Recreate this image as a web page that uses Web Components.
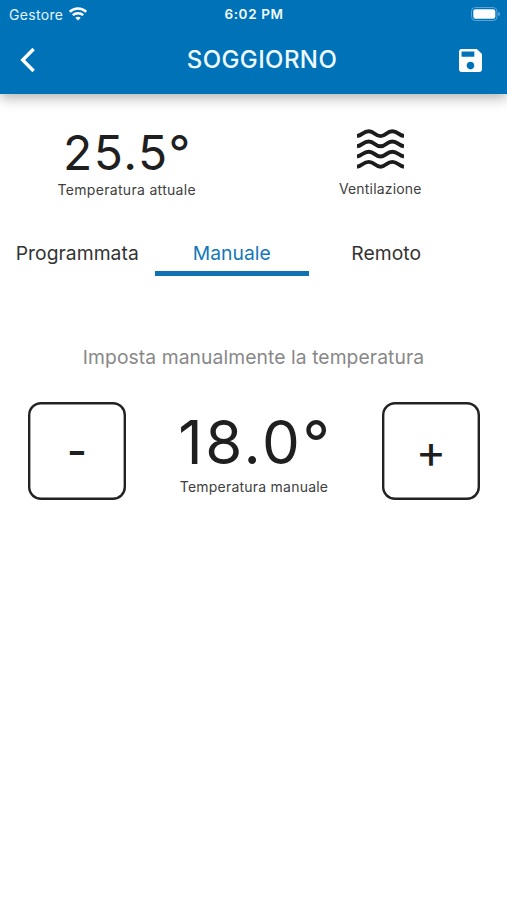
<!DOCTYPE html>
<html lang="it">
<head>
<meta charset="utf-8">
<title>Soggiorno</title>
<style>
html,body{margin:0;height:100%;background:#fff;overflow:hidden}
body{font-family:Inter,"Liberation Sans",sans-serif;color:#1f1f1f}
</style>
</head>
<body>
<thermostat-screen></thermostat-screen>
<script>
const define=(name,html)=>customElements.define(name,class extends HTMLElement{
  constructor(){super();this.attachShadow({mode:'open'}).innerHTML=html;}
});

define('status-bar',`<style>
:host{display:grid;grid-template-columns:1fr auto 1fr;height:27px;align-items:center;color:#e6f5ff;font-size:14px;line-height:27px}
.left{display:flex;align-items:center;gap:6px;padding-left:9px;letter-spacing:.32px}
.time{font-weight:600;font-size:13.5px;letter-spacing:.6px;color:#f2faff;padding:1px 0 0 1px}
.right{display:flex;justify-content:flex-end;padding-right:6px}
svg{display:block}
</style>
<div class="left"><span>Gestore</span><svg width="18" height="14" viewBox="0 0.5 18 14" fill="none" stroke="#fff" stroke-width="2.5"><path d="M.8 5.3C5.4.8 12.6.8 17.2 5.3"/><path d="M3.8 8.7c2.9-2.7 7.5-2.7 10.4 0"/><path d="M9 14l-2.700-2.800c1.500-1.300 3.900-1.300 5.400 0z" fill="#fff" stroke="none"/></svg></div>
<div class="time">6:02 PM</div>
<div class="right"><svg width="30" height="14" viewBox="0 0 30 14"><rect x=".5" y=".5" width="25.5" height="13" rx="3.8" fill="none" stroke="#5aa5d6"/><rect x="2.3" y="2.3" width="22" height="9.4" rx="2.2" fill="#fff"/><path d="M27.4 4.8c2 .8 2 3.600 0 4.400z" fill="#79b8e2"/></svg></div>`);

define('app-header',`<style>
:host{display:block;height:94px;background:#0072b8;box-shadow:0 4px 12px rgba(0,0,0,.3)}
.bar{display:grid;grid-template-columns:69px 1fr 52px;height:66px;align-items:center}
.title{text-align:center;color:#eefaff;font-size:24px;line-height:30px;font-weight:500;letter-spacing:.4px}
svg{display:block}
.back{padding-left:20px}.save{padding-left:4px}
</style>
<status-bar></status-bar>
<div class="bar"><div class="back"><svg width="16" height="26" viewBox="0 0 16 26" fill="none" stroke="#fff" stroke-width="3.4"><path d="M13.600 2L2.700 13l10.900 11"/></svg></div>
<div class="title"><slot></slot></div>
<div class="save"><svg width="23" height="23" viewBox="3 3 18 18" fill="#fff"><path d="M17 3H5c-1.110 0-2 .9-2 2v14c0 1.100.89 2 2 2h14c1.100 0 2-.9 2-2V7l-4-4zm-5 16c-1.660 0-3-1.340-3-3s1.340-3 3-3 3 1.340 3 3-1.340 3-3 3zm3-10H5V5h10v4z"/></svg></div></div>`);

define('metric-value',`<style>
:host{display:flex;flex-direction:column;align-items:center}
.value{font-size:var(--size,48px);line-height:var(--line,57px);letter-spacing:var(--track,1.5px);margin-right:calc(-1 * var(--track,1.5px));padding-top:var(--drop,0px);font-weight:370;white-space:nowrap}
.label{font-size:14px;line-height:18px;color:#404040;letter-spacing:var(--label-track,.31px);white-space:nowrap}
</style><div class="value"><slot></slot></div><div class="label"><slot name="label"></slot></div>`);

define('wave-icon',`<style>:host{display:block;height:57px}svg{display:block}</style>
<svg width="47" height="57" viewBox="0 0.500 47 57" fill="none" stroke="#1c1c1c" stroke-width="3.900">
<path d="M0 12.600C5.500 11.800 6 7.800 11.750 7.800S18 12.600 23.500 12.600 29.500 7.800 35.250 7.800 41.500 11.800 47 12.600"/>
<path d="M0 22.800C5.500 22 6 18 11.750 18S18 22.800 23.500 22.800 29.500 18 35.250 18 41.500 22 47 22.800"/>
<path d="M0 33C5.500 32.200 6 28.200 11.750 28.200S18 33 23.500 33 29.500 28.200 35.250 28.200 41.500 32.200 47 33"/>
<path d="M0 43.200C5.500 42.400 6 38.400 11.750 38.400S18 43.200 23.500 43.200 29.500 38.400 35.250 38.400 41.500 42.400 47 43.200"/>
</svg>`);

define('mode-tab',`<style>
:host{display:flex;flex:0 0 154.500px;height:46px;box-sizing:border-box;justify-content:center;font-size:19.300px;line-height:46px;letter-spacing:var(--track,.05px);color:#333}
:host([selected]){color:#1478bb;box-shadow:inset 0 -5px #0e72b4}
</style><slot></slot>`);

define('mode-tabs',`<style>:host{display:flex;height:46px;margin-top:29px}</style><slot></slot>`);

define('step-button',`<style>
:host{display:block;width:98px;height:98px;border-radius:13px;box-shadow:inset 0 0 0 2.400px #222}
button{all:unset;display:block;width:100%;height:98px;font-size:46px;line-height:99px;text-align:center}
:host([minus]) button{font-size:44px;font-weight:500;line-height:98px}
</style><button><slot></slot></button>`);

define('thermostat-screen',`<style>
:host{display:block;height:900px;background:#fff}
.summary{display:grid;grid-template-columns:1fr 1fr;height:107px;padding-top:30px;box-sizing:border-box}
.fan{--label-track:.18px;--track:0px}
.fan span{display:block;margin-top:-1px}
.hint{margin-top:68px;height:26px;line-height:26px;font-size:19.300px;color:#888;text-align:center;letter-spacing:.08px}
.control{display:flex;justify-content:space-between;align-items:flex-start;padding:0 27px 0 28px;margin-top:32px}
.target{--size:60px;--line:72px;--drop:4px;--track:2.600px;--label-track:.220px}
</style>
<app-header>SOGGIORNO</app-header>
<div class="summary">
<metric-value>25.5°<span slot="label">Temperatura attuale</span></metric-value>
<metric-value class="fan"><wave-icon></wave-icon><span slot="label">Ventilazione</span></metric-value>
</div>
<mode-tabs><mode-tab>Programmata</mode-tab><mode-tab selected>Manuale</mode-tab><mode-tab>Remoto</mode-tab></mode-tabs>
<div class="hint">Imposta manualmente la temperatura</div>
<div class="control"><step-button minus>-</step-button>
<metric-value class="target">18.0°<span slot="label">Temperatura manuale</span></metric-value>
<step-button>+</step-button></div>`);
</script>
</body>
</html>
